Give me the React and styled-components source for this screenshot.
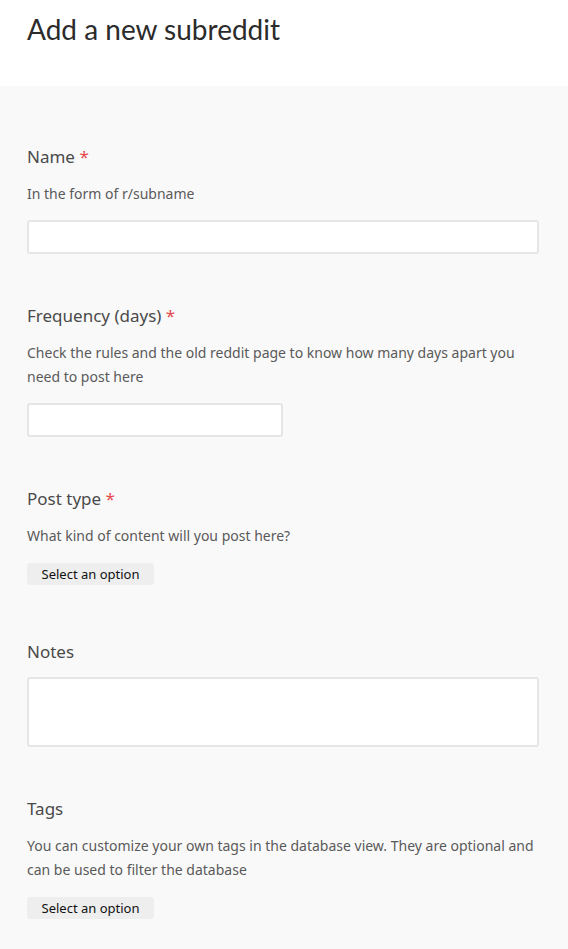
import React from 'react'
import styled, { createGlobalStyle } from 'styled-components'

const GlobalStyle = createGlobalStyle`
  html, body {
    margin: 0;
    padding: 0;
    background: #f9f9f9;
  }
  body {
    font-family: "Noto Sans", "Open Sans", sans-serif;
    color: #444;
  }
`

const Header = styled.header`
  background: #fff;
  height: 86px;
  padding: 11px 27px 0;
  box-sizing: border-box;
  h1 {
    margin: 0;
    font-family: Lato, "Noto Sans", sans-serif;
    font-weight: 400;
    font-size: 28px;
    line-height: 36px;
    color: #2b2b2b;
  }
`

const Form = styled.form`
  display: flex;
  flex-direction: column;
  gap: 50px;
  padding: 59px 29px 40px 27px;
`

const Field = styled.div`
  display: flex;
  flex-direction: column;
  align-items: flex-start;
`

const Label = styled.label`
  font-size: 17px;
  line-height: 24px;
  color: #4a4a4a;
  span {
    color: #e5484d;
  }
`

const Hint = styled.p`
  margin: 13px 0 0;
  font-size: 14px;
  line-height: 24px;
  color: #5a5a5a;
`

const Input = styled.input`
  box-sizing: border-box;
  margin-top: 14px;
  width: ${({ $width }) => $width || '100%'};
  height: 34px;
  background: #fff;
  border: 2px solid #e6e6e6;
  border-radius: 3px;
  outline: none;
`

const TextArea = styled.textarea`
  box-sizing: border-box;
  margin-top: 13px;
  width: 100%;
  height: 70px;
  background: #fff;
  border: 2px solid #e6e6e6;
  border-radius: 3px;
  resize: none;
  outline: none;
`

const SelectButton = styled.button`
  margin: 15px 0 5px;
  width: 127px;
  height: 22px;
  padding: 0;
  border: none;
  border-radius: 3px;
  background: #eeeeee;
  font-family: inherit;
  font-size: 13px;
  color: #111;
  cursor: pointer;
`

const Required = () => <span>*</span>

export default function App() {
  return (
    <>
      <GlobalStyle />
      <Header>
        <h1>Add a new subreddit</h1>
      </Header>
      <Form>
        <Field>
          <Label>
            Name <Required />
          </Label>
          <Hint>In the form of r/subname</Hint>
          <Input />
        </Field>
        <Field>
          <Label>
            Frequency (days) <Required />
          </Label>
          <Hint>
            Check the rules and the old reddit page to know how many days apart you need to post
            here
          </Hint>
          <Input $width="256px" />
        </Field>
        <Field>
          <Label>
            Post type <Required />
          </Label>
          <Hint>What kind of content will you post here?</Hint>
          <SelectButton type="button">Select an option</SelectButton>
        </Field>
        <Field>
          <Label>Notes</Label>
          <TextArea />
        </Field>
        <Field>
          <Label>Tags</Label>
          <Hint>
            You can customize your own tags in the database view. They are optional and can be used
            to filter the database
          </Hint>
          <SelectButton type="button">Select an option</SelectButton>
        </Field>
      </Form>
    </>
  )
}
